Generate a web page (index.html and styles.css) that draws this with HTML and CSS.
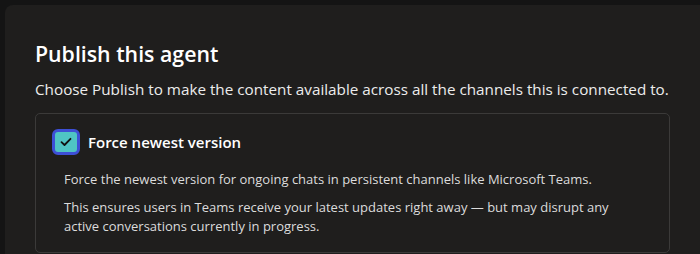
FILE: index.html
```html
<!DOCTYPE html>
<html>
<head>
<meta charset="utf-8">
<link rel="stylesheet" href="styles.css">
</head>
<body>
<div class="dialog">
  <h1 class="title">Publish this agent</h1>
  <p class="lead">Choose Publish to make the content available across all the channels this is connected to.</p>
  <div class="card">
    <label class="option">
      <span class="checkbox">
        <svg width="12" height="10" viewBox="0 0 12 10"><path d="M1.5 5.2 L4.5 8 L10.5 1.8" fill="none" stroke="#111" stroke-width="1.8" stroke-linecap="round" stroke-linejoin="round"/></svg>
      </span>
      <span class="option-label">Force newest version</span>
    </label>
    <p class="desc">Force the newest version for ongoing chats in persistent channels like Microsoft Teams.</p>
    <p class="desc">This ensures users in Teams receive your latest updates right away — but may disrupt any active conversations currently in progress.</p>
  </div>
</div>
</body>
</html>
```
FILE: styles.css
```css
html, body {
  margin: 0;
  padding: 0;
  background: #141414;
  height: 100%;
  overflow: hidden;
}
body {
  padding: 5px 0 0 5px;
  box-sizing: border-box;
  font-family: "Open Sans", "Noto Sans", sans-serif;
}
.dialog {
  background: #1f1e1d;
  border-radius: 8px 0 0 0;
  height: 100%;
  padding: 34px 0 0 30px;
  box-sizing: border-box;
}
.title {
  margin: 0;
  color: #ffffff;
  font-size: 21.3px;
  font-weight: 600;
  line-height: 30px;
}
.lead {
  margin: 9px 0 0 0;
  color: #ececec;
  font-size: 15.25px;
  line-height: 22px;
}
.card {
  margin-top: 13px;
  width: 635px;
  height: 140px;
  box-sizing: border-box;
  border: 1px solid #3b3a39;
  border-radius: 5px;
  padding: 15px 16px 0 16px;
}
.option {
  display: flex;
  align-items: center;
  gap: 8px;
}
.checkbox {
  width: 28px;
  height: 26px;
  box-sizing: border-box;
  border: 3px solid #3d4fd6;
  border-radius: 6px;
  background: #4fc4c4;
  display: flex;
  align-items: center;
  justify-content: center;
}
.option-label {
  color: #ffffff;
  font-size: 15px;
  font-weight: 600;
}
.desc {
  margin: 15px 0 0 12px;
  color: #dcdcdc;
  font-size: 13px;
  line-height: 19px;
  max-width: 560px;
}
.desc + .desc {
  margin-top: 9px;
}
```
